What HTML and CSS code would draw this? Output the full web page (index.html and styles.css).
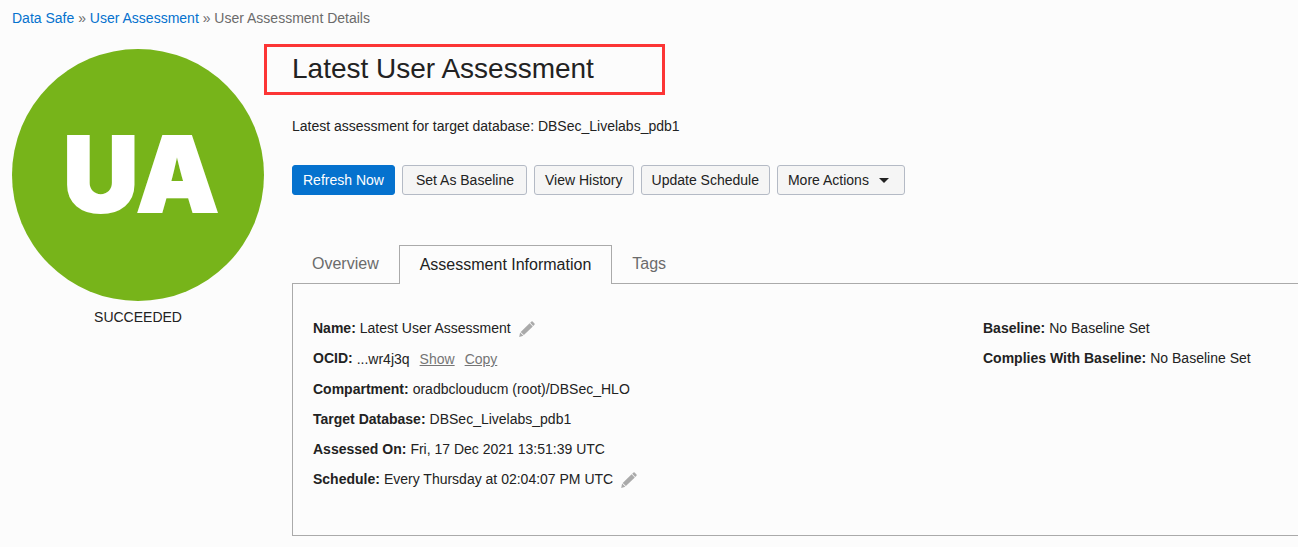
FILE: index.html
```html
<!DOCTYPE html>
<html lang="en">
<head>
<meta charset="utf-8">
<title>User Assessment Details</title>
<link rel="stylesheet" href="styles.css">
</head>
<body>
<nav class="breadcrumb" aria-label="Breadcrumb">
  <a href="#">Data Safe</a> » <a href="#">User Assessment</a> » <span>User Assessment Details</span>
</nav>
<div class="page">
  <aside class="status">
    <div class="badge">UA</div>
    <p class="state">SUCCEEDED</p>
  </aside>
  <main class="main">
    <h1 class="title">Latest User Assessment</h1>
    <p class="description">Latest assessment for target database: DBSec_Livelabs_pdb1</p>
    <div class="actions">
      <button class="btn btn-primary" type="button">Refresh Now</button>
      <button class="btn btn-wide" type="button">Set As Baseline</button>
      <button class="btn" type="button">View History</button>
      <button class="btn" type="button">Update Schedule</button>
      <button class="btn btn-menu" type="button">More Actions
        <svg class="caret" viewBox="0 0 10 5" aria-hidden="true"><path d="M0 0h10L5 5z"/></svg>
      </button>
    </div>
    <div class="tabs" role="tablist">
      <button class="tab" type="button" role="tab">Overview</button>
      <button class="tab tab-active" type="button" role="tab" aria-selected="true">Assessment Information</button>
      <button class="tab" type="button" role="tab">Tags</button>
    </div>
    <section class="panel">
      <dl class="fields">
        <div class="field"><dt>Name:</dt><dd>Latest User Assessment</dd>
          <button class="edit" type="button" aria-label="Edit name"><svg class="pencil" viewBox="0 0 16 16"><path d="M11.2 1.8 12.5.6Q13 .1 13.6.6l1.9 1.9q.5.6 0 1.2l-1.3 1.2zM10.6 2.3l3.2 3.2-8.9 8.6-3.2-3.2zM1.1 11.6l3.3 3.2L.2 15.9z"/></svg></button>
        </div>
        <div class="field field-links"><dt>OCID:</dt><dd>...wr4j3q</dd><a class="link" href="#">Show</a><a class="link" href="#">Copy</a></div>
        <div class="field"><dt>Compartment:</dt><dd>oradbclouducm (root)/DBSec_HLO</dd></div>
        <div class="field"><dt>Target Database:</dt><dd>DBSec_Livelabs_pdb1</dd></div>
        <div class="field"><dt>Assessed On:</dt><dd>Fri, 17 Dec 2021 13:51:39 UTC</dd></div>
        <div class="field"><dt>Schedule:</dt><dd>Every Thursday at 02:04:07 PM UTC</dd>
          <button class="edit" type="button" aria-label="Edit schedule"><svg class="pencil" viewBox="0 0 16 16"><path d="M11.2 1.8 12.5.6Q13 .1 13.6.6l1.9 1.9q.5.6 0 1.2l-1.3 1.2zM10.6 2.3l3.2 3.2-8.9 8.6-3.2-3.2zM1.1 11.6l3.3 3.2L.2 15.9z"/></svg></button>
        </div>
      </dl>
      <dl class="fields">
        <div class="field"><dt>Baseline:</dt><dd>No Baseline Set</dd></div>
        <div class="field"><dt>Complies With Baseline:</dt><dd>No Baseline Set</dd></div>
      </dl>
    </section>
  </main>
</div>
</body>
</html>
```
FILE: styles.css
```css
* { box-sizing: border-box; }

body {
  margin: 0;
  padding: 8px 0 11px 12px;
  background: #fcfcfc;
  color: #222;
  font: 14px/20px "Liberation Sans", Arial, sans-serif;
}

h1, p, dl, dd { margin: 0; }

button { font: inherit; color: inherit; }

.breadcrumb { color: #6b6b6b; }
.breadcrumb a { color: #0572ce; text-decoration: none; }

.page {
  display: grid;
  grid-template-columns: 252px minmax(0, 1fr);
  margin-top: 16px;
}

.status { padding-top: 5px; text-align: center; }

.badge {
  display: flex;
  align-items: center;
  justify-content: center;
  aspect-ratio: 1;
  padding: 0 0 2px 6px;
  border-radius: 50%;
  background: #77b41a;
  color: #fff;
  font: 900 104px/1 Inter, "Liberation Sans", sans-serif;
  -webkit-text-stroke: 2px #fff;
}

.state { margin-top: 6px; }

.title {
  width: 401px;
  max-width: 100%;
  padding: 0 25px 2px;
  border: 3px solid #fc3535;
  font-size: 28px;
  font-weight: 400;
  line-height: 43px;
}

.description { margin: 21px 0 0 28px; }

.actions {
  display: flex;
  flex-wrap: wrap;
  gap: 7px;
  margin: 29px 0 0 28px;
}

.btn {
  height: 30px;
  padding: 0 10px;
  border: 1px solid #b4bac5;
  border-radius: 3px;
  background: #f5f5f5;
}
.btn-primary { border-color: #0572ce; background: #0572ce; color: #fff; }
.btn-wide { padding: 0 12px 0 13px; }
.btn-menu { display: flex; align-items: center; gap: 10px; padding-right: 15px; }

.caret { width: 10px; height: 5px; fill: #222; }

.tabs { display: flex; margin: 50px 0 0 28px; }

.tab {
  height: 39px;
  padding: 0 20px 2px;
  border: 0;
  background: none;
  color: #6b6b6b;
  font-size: 16px;
}
.tab-active {
  z-index: 1;
  padding-bottom: 0;
  border: 1px solid #aaa;
  border-bottom: 0;
  background: #fcfcfc;
  color: #222;
}

.panel {
  display: grid;
  grid-template-columns: 2fr 1fr;
  gap: 40px;
  min-height: 253px;
  margin: -1px 0 0 28px;
  padding: 34px 0 45px 20px;
  border: 1px solid #aaa;
  border-right: 0;
}

.fields { display: flex; flex-direction: column; gap: 10px; }

.field { display: flex; align-items: center; gap: 4px; height: 20px; }
.field dt { font-weight: 700; }
.field-links { align-items: flex-end; height: 21px; }
.field-links dt { align-self: flex-start; }

.link { margin-left: 6px; color: #757575; }

.edit { display: flex; margin: 2px 0 0 4px; padding: 0; border: 0; background: none; }

.pencil { width: 16px; height: 16px; fill: #aaa; }
```
